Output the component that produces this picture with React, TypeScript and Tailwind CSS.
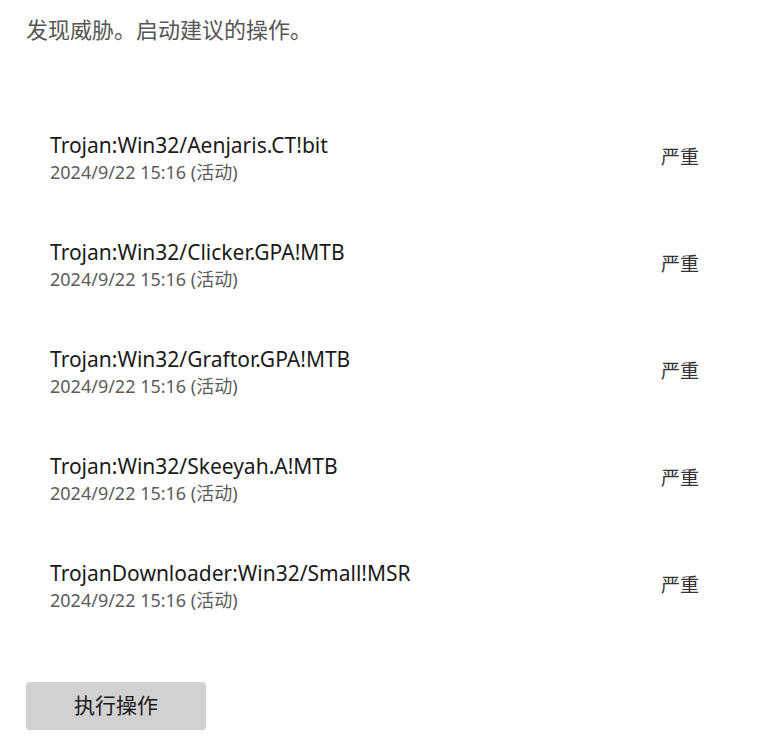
const threats = [
  "Trojan:Win32/Aenjaris.CT!bit",
  "Trojan:Win32/Clicker.GPA!MTB",
  "Trojan:Win32/Graftor.GPA!MTB",
  "Trojan:Win32/Skeeyah.A!MTB",
  "TrojanDownloader:Win32/Small!MSR",
]

export default function App() {
  return (
    <div
      className="w-[758px] h-[756px] bg-white px-[26px] pt-[13px]"
      style={{ fontFamily: '"Segoe UI", "Noto Sans", "Noto Sans CJK SC", sans-serif' }}
    >
      <h1 className="h-8 leading-8 text-[22px] text-[#555]">发现威胁。启动建议的操作。</h1>

      <div className="mt-[59px] flex flex-col">
        {threats.map((name, i) => (
          <div key={i} className="h-[107px] flex items-center pl-6 pr-[33px]">
            <div className="flex-1 flex flex-col">
              <span className="text-[21px] leading-[28px] text-[#1a1a1a]">{name}</span>
              <span className="text-[18px] leading-[26px] text-[#5c5c5c]">2024/9/22 15:16 (活动)</span>
            </div>
            <span className="text-[19px] text-[#333]">严重</span>
          </div>
        ))}
      </div>

      <button className="mt-[43px] w-[180px] h-12 rounded bg-[#d1d1d1] text-[21px] text-[#1a1a1a]">
        执行操作
      </button>
    </div>
  )
}
